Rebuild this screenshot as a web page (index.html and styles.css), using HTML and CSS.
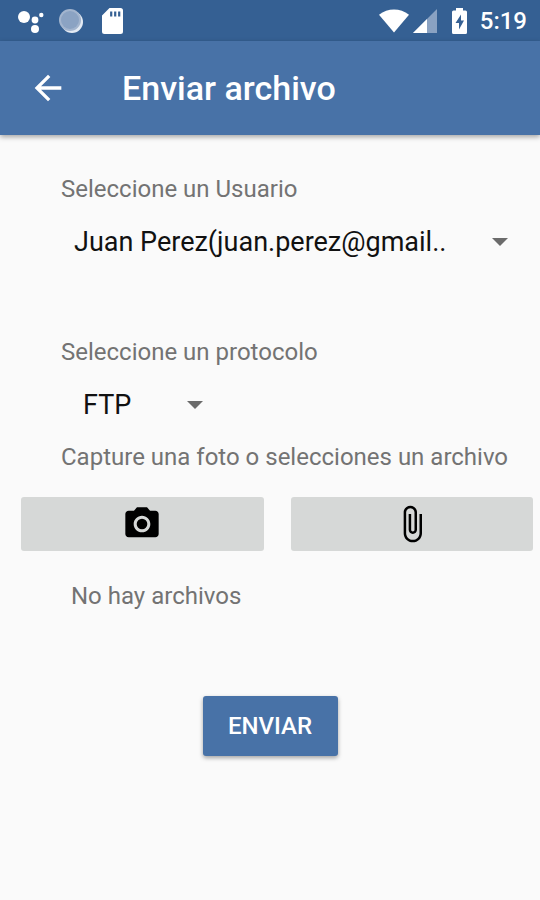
FILE: index.html
```html
<!DOCTYPE html>
<html lang="es">
<head>
<meta charset="utf-8">
<meta name="viewport" content="width=device-width, initial-scale=1">
<title>Enviar archivo</title>
<link rel="stylesheet" href="styles.css">
</head>
<body>
<div class="status">
	<svg class="dots" width="26" height="24" viewBox="0 0 26 24" fill="#fff">
		<circle cx="6" cy="8" r="6"/>
		<circle cx="17" cy="11" r="3.4"/>
		<circle cx="23.300" cy="6" r="2.200"/>
		<circle cx="17" cy="20" r="4"/>
	</svg>
	<svg class="sync" width="24" height="24" viewBox="0 0 24 24">
		<circle cx="13" cy="13" r="11" fill="#e3eaf3"/>
		<circle cx="11" cy="11" r="11" fill="#a3b5ce"/>
		<circle cx="11" cy="11" r="9" fill="#8ba3c3"/>
	</svg>
	<svg class="sd" width="21" height="26" viewBox="0 0 21 26">
		<path fill="#fff" d="M7.500 0H18.500A2.500 2.500 0 0 1 21 2.500V23.500A2.500 2.500 0 0 1 18.500 26H2.500A2.500 2.500 0 0 1 0 23.500V7.500z"/>
		<path stroke="#356093" stroke-width="2.200" d="M9.200 3.500V8.500M13.200 3.500V8.500M17.200 3.500V8.500"/>
	</svg>
	<svg class="wifi" width="30" height="24" viewBox="0 0 31 24">
		<path fill="#fff" d="M15.500 24L0 5.500C9-1.800 22-1.800 31 5.500z"/>
	</svg>
	<svg class="signal" width="24" height="24" viewBox="0 0 24 24">
		<path fill="#8aa2c2" d="M24 0V24H0z"/>
		<path fill="#fff" d="M14 10V24H0z"/>
	</svg>
	<svg class="battery" width="15" height="26" viewBox="0 0 15 26">
		<path fill="#fff" d="M4 0H11V2.500H13.500A1.500 1.500 0 0 1 15 4V24.500A1.500 1.500 0 0 1 13.500 26H1.500A1.500 1.500 0 0 1 0 24.500V4A1.500 1.500 0 0 1 1.500 2.500H4z"/>
		<path fill="#356093" d="M9 6.500L3.500 15H7V21.500L12 12.500H9z"/>
	</svg>
	<span class="clock">5:19</span>
</div>
<header class="bar">
	<button type="button" class="back" aria-label="Volver">
		<svg width="40" height="40" viewBox="0 0 24 24"><path fill="#fff" d="M20 11H7.830l5.590-5.590L12 4l-8 8 8 8 1.410-1.410L7.830 13H20v-2z"/></svg>
	</button>
	<h1>Enviar archivo</h1>
</header>
<form class="send">
	<label for="user">Seleccione un Usuario</label>
	<div class="spinner user">
		<select id="user"><option>Juan Perez(juan.perez@gmail..</option></select>
	</div>
	<label for="protocol">Seleccione un protocolo</label>
	<div class="spinner protocol">
		<select id="protocol"><option>FTP</option></select>
	</div>
	<p class="hint">Capture una foto o selecciones un archivo</p>
	<div class="pick">
		<button type="button" aria-label="Capturar foto">
			<svg width="40" height="40" viewBox="0 0 24 24">
				<circle cx="12" cy="12" r="3.200"/>
				<path d="M9 2L7.170 4H4c-1.100 0-2 .9-2 2v12c0 1.100.9 2 2 2h16c1.100 0 2-.9 2-2V6c0-1.100-.9-2-2-2h-3.170L15 2H9zm3 15c-2.760 0-5-2.240-5-5s2.240-5 5-5 5 2.240 5 5-2.240 5-5 5z"/>
			</svg>
		</button>
		<button type="button" aria-label="Adjuntar archivo">
			<svg width="40" height="40" viewBox="0 0 24 24"><path d="M16.500 6v11.500c0 2.210-1.790 4-4 4s-4-1.790-4-4V5c0-1.380 1.120-2.500 2.500-2.500s2.500 1.120 2.500 2.500v10.500c0 .55-.45 1-1 1s-1-.45-1-1V6H10v9.500c0 1.380 1.120 2.500 2.500 2.500s2.500-1.120 2.500-2.500V5c0-2.210-1.790-4-4-4S7 2.790 7 5v12.500c0 3.040 2.460 5.500 5.500 5.500s5.500-2.460 5.500-5.500V6h-1.500z"/></svg>
		</button>
	</div>
	<p class="files">No hay archivos</p>
	<button type="submit" class="submit">ENVIAR</button>
</form>
</body>
</html>
```
FILE: styles.css
```css
*{box-sizing:border-box;}
body{margin:0;min-height:100vh;background-color:#fafafa;color:#737373;font-family:Roboto,"Liberation Sans",sans-serif;font-size:24px;line-height:28px;}
button,select{font-family:inherit;border:0;margin:0;padding:0;}
svg{display:block;flex:none;}

.status{display:flex;align-items:center;height:41px;padding:0 13px 0 18px;background-color:#356093;color:#fff;}
.sync{margin-left:15px;}
.sd{margin-left:19px;}
.wifi{margin-left:auto;}
.signal{margin-left:4px;}
.battery{margin-left:15px;}
.clock{margin-left:13px;font-weight:500;}

.bar{display:flex;align-items:center;height:94px;padding-left:28px;background-color:#4872a7;color:#fff;box-shadow:0 2px 5px rgba(0,0,0,.35);}
.back{background:none;}
.bar h1{margin:0 0 0 54px;font-size:34px;line-height:40px;font-weight:500;}

.send{display:flex;flex-direction:column;padding:40px 7px 40px 21px;}
.send label,.hint{margin:0 0 0 40px;}
.spinner{display:flex;align-items:center;height:40px;}
.spinner select{flex:1;min-width:0;height:40px;appearance:none;background:none;color:#111;font-size:27px;}
.spinner:after{content:"";width:16px;height:8px;background-color:#6b6b6b;clip-path:polygon(0 0,100% 0,50% 100%);pointer-events:none;}
.send .user{margin:19px 25px 76px 53px;}
.send .protocol{width:120px;margin:19px 0 18px 62px;}
.pick{display:grid;grid-template-columns:1fr 1fr;gap:27px;margin-top:26px;}
.pick button{display:flex;align-items:center;justify-content:center;height:54px;background-color:#d6d8d7;border-radius:3px;}
.files{margin:31px 0 0 50px;}
.submit{align-self:center;width:135px;height:60px;margin:86px 14px 0 0;border-radius:3px;background-color:#4872a7;color:#fff;font-size:24px;font-weight:500;box-shadow:0 2px 4px rgba(0,0,0,.35);}
```
